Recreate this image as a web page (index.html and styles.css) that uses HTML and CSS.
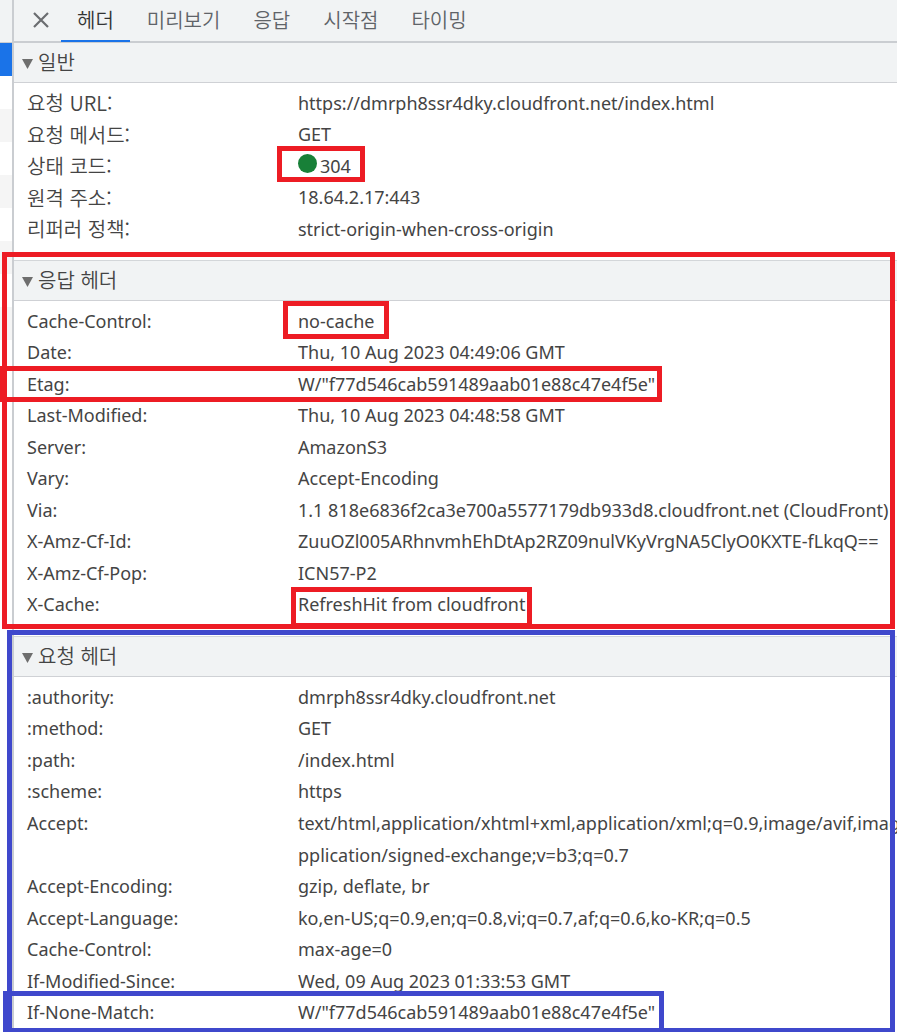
FILE: index.html
```html
<!DOCTYPE html>
<html lang="ko">
<head>
<meta charset="utf-8">
<title>헤더</title>
<link rel="stylesheet" href="styles.css">
</head>
<body>
<div class="devtools">
  <aside class="requests">
    <div class="requests-head"></div>
    <div class="request selected"></div>
    <div class="request"></div>
    <div class="request"></div>
    <div class="request"></div>
    <div class="request"></div>
    <div class="request"></div>
    <div class="request"></div>
    <div class="request"></div>
    <div class="request"></div>
  </aside>
  <main class="panel">
    <nav class="tabs">
      <button class="close" type="button" aria-label="닫기">
        <svg width="16" height="16" viewBox="0 0 16 16"><path d="M1 1L15 15M15 1L1 15" fill="none" stroke="#6b6d70" stroke-width="2.2"/></svg>
      </button>
      <button class="tab active" type="button">헤더</button>
      <button class="tab" type="button">미리보기</button>
      <button class="tab" type="button">응답</button>
      <button class="tab" type="button">시작점</button>
      <button class="tab" type="button">타이밍</button>
    </nav>

    <section class="section general">
      <h2 class="title"><svg class="arrow" width="11" height="11" viewBox="0 0 22 22"><path d="M0 2H22L11 22Z" fill="#6e6e6e"/></svg>일반</h2>
      <dl class="rows">
        <div class="row"><dt class="ko">요청 URL:</dt><dd>https://dmrph8ssr4dky.cloudfront.net/index.html</dd></div>
        <div class="row"><dt class="ko">요청 메서드:</dt><dd>GET</dd></div>
        <div class="row"><dt class="ko">상태 코드:</dt><dd><span class="status"></span>304<span class="mark mark-status"></span></dd></div>
        <div class="row"><dt class="ko">원격 주소:</dt><dd>18.64.2.17:443</dd></div>
        <div class="row"><dt class="ko">리퍼러 정책:</dt><dd>strict-origin-when-cross-origin</dd></div>
      </dl>
    </section>

    <section class="section">
      <h2 class="title"><svg class="arrow" width="11" height="11" viewBox="0 0 22 22"><path d="M0 2H22L11 22Z" fill="#6e6e6e"/></svg>응답 헤더</h2>
      <dl class="rows">
        <div class="row"><dt>Cache-Control:</dt><dd>no-cache<span class="mark mark-cache"></span></dd></div>
        <div class="row"><dt>Date:</dt><dd>Thu, 10 Aug 2023 04:49:06 GMT</dd></div>
        <div class="row"><dt>Etag:</dt><dd>W/"f77d546cab591489aab01e88c47e4f5e"<span class="mark mark-etag"></span></dd></div>
        <div class="row"><dt>Last-Modified:</dt><dd>Thu, 10 Aug 2023 04:48:58 GMT</dd></div>
        <div class="row"><dt>Server:</dt><dd>AmazonS3</dd></div>
        <div class="row"><dt>Vary:</dt><dd>Accept-Encoding</dd></div>
        <div class="row"><dt>Via:</dt><dd>1.1 818e6836f2ca3e700a5577179db933d8.cloudfront.net (CloudFront)</dd></div>
        <div class="row"><dt>X-Amz-Cf-Id:</dt><dd>ZuuOZl005ARhnvmhEhDtAp2RZ09nulVKyVrgNA5ClyO0KXTE-fLkqQ==</dd></div>
        <div class="row"><dt>X-Amz-Cf-Pop:</dt><dd>ICN57-P2</dd></div>
        <div class="row"><dt>X-Cache:</dt><dd>RefreshHit from cloudfront<span class="mark mark-hit"></span></dd></div>
      </dl>
      <span class="mark mark-response"></span>
    </section>

    <section class="section">
      <h2 class="title"><svg class="arrow" width="11" height="11" viewBox="0 0 22 22"><path d="M0 2H22L11 22Z" fill="#6e6e6e"/></svg>요청 헤더</h2>
      <dl class="rows">
        <div class="row"><dt>:authority:</dt><dd>dmrph8ssr4dky.cloudfront.net</dd></div>
        <div class="row"><dt>:method:</dt><dd>GET</dd></div>
        <div class="row"><dt>:path:</dt><dd>/index.html</dd></div>
        <div class="row"><dt>:scheme:</dt><dd>https</dd></div>
        <div class="row"><dt>Accept:</dt><dd>text/html,application/xhtml+xml,application/xml;q=0.9,image/avif,image<br>pplication/signed-exchange;v=b3;q=0.7</dd></div>
        <div class="row"><dt>Accept-Encoding:</dt><dd>gzip, deflate, br</dd></div>
        <div class="row"><dt>Accept-Language:</dt><dd>ko,en-US;q=0.9,en;q=0.8,vi;q=0.7,af;q=0.6,ko-KR;q=0.5</dd></div>
        <div class="row"><dt>Cache-Control:</dt><dd>max-age=0</dd></div>
        <div class="row"><dt>If-Modified-Since:</dt><dd>Wed, 09 Aug 2023 01:33:53 GMT</dd></div>
        <div class="row"><dt>If-None-Match:</dt><dd>W/"f77d546cab591489aab01e88c47e4f5e"<span class="mark blue mark-match"></span></dd></div>
      </dl>
      <span class="mark blue mark-request"></span>
    </section>
  </main>
</div>
</body>
</html>
```
FILE: styles.css
```css
* {
  box-sizing: border-box;
}

body {
  margin: 0;
  overflow: hidden;
  background: #fff;
  color: #444;
  font-family: "Noto Sans", "Noto Sans CJK KR", sans-serif;
  font-size: 18px;
}

.devtools {
  display: flex;
  min-height: 100vh;
}

.requests {
  flex: none;
  width: 12px;
}

.requests-head {
  height: 43px;
  background: #f1f3f4;
  border-bottom: 1px solid #cbcdd1;
}

.request {
  height: 33px;
}

.request:nth-child(even) {
  background: #f5f5f5;
}

.requests .selected {
  background: #1a73e8;
}

.panel {
  flex: 1;
  min-width: 0;
  border-left: 2px solid #cacdd1;
}

.tabs {
  display: flex;
  height: 43px;
  background: #f1f3f4;
  border-bottom: 2px solid #cacdd1;
}

.close,
.tab {
  border: 0;
  background: none;
  font-family: "Noto Sans CJK KR", sans-serif;
  font-size: 20px;
  font-weight: 350;
  color: #5f6368;
}

.close {
  width: 47px;
  padding: 0 0 2px 7px;
}

.close svg {
  display: block;
  margin: 0 auto;
}

.tab {
  height: 42px;
  padding: 0 16px 2px 17px;
  border-bottom: 2px solid transparent;
}

.tab.active {
  padding-left: 16px;
  color: #333;
  border-bottom-color: #1a73e8;
}

.section {
  position: relative;
}

.title {
  display: flex;
  align-items: center;
  gap: 5px;
  height: 41px;
  margin: 0;
  padding: 0 8px 3px;
  background: #f1f3f4;
  border-top: 1px solid #d3d6d9;
  border-bottom: 1px solid #cfd1d5;
  font-family: "Noto Sans CJK KR", sans-serif;
  font-size: 20px;
  font-weight: 350;
}

.general .title {
  height: 40px;
  border-top: 0;
}

.arrow {
  margin-top: 4px;
}

.rows {
  margin: 0;
  padding: 4px 0 16px 13px;
}

.general .rows {
  padding-bottom: 15px;
}

.row {
  position: relative;
  display: flex;
  line-height: 32px;
  white-space: nowrap;
}

.row:nth-child(even) {
  line-height: 31px;
}

dt {
  flex: none;
  width: 271px;
}

dt.ko {
  font-family: "Noto Sans CJK KR", sans-serif;
  font-size: 20px;
  font-weight: 350;
}

dd {
  position: relative;
  margin: 0;
}

.status {
  display: inline-block;
  width: 19px;
  height: 19px;
  margin-right: 3px;
  border-radius: 50%;
  background: #188038;
}

.mark {
  position: absolute;
  border: 5px solid #ed1c24;
  pointer-events: none;
}

.mark.blue {
  border-color: #3f48cc;
}

.mark-status {
  left: -21px;
  top: -4px;
  width: 88px;
  height: 36px;
}

.mark-cache {
  left: -15px;
  top: -4px;
  width: 106px;
  height: 38px;
}

.mark-etag {
  left: -298px;
  top: -2px;
  width: 662px;
  height: 36px;
}

.mark-hit {
  left: -7px;
  top: -2px;
  width: 241px;
  height: 41px;
}

.mark-match {
  left: -295px;
  top: -6px;
  width: 661px;
  height: 42px;
}

.mark-response {
  left: -12px;
  right: 2px;
  top: -8px;
  bottom: 7px;
}

.mark-request {
  left: -7px;
  right: 2px;
  top: -6px;
  bottom: 11px;
}
```
